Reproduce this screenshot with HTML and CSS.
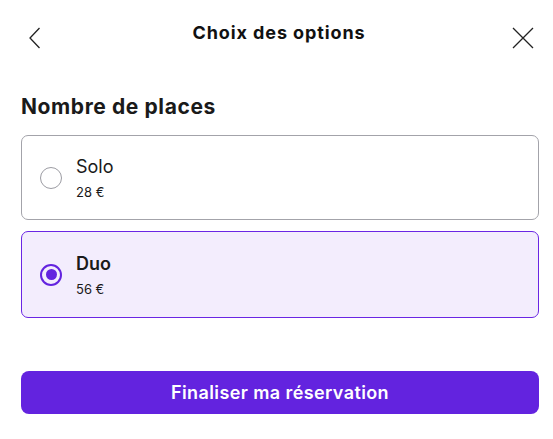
FILE: index.html
```html
<!DOCTYPE html>
<html lang="fr">
<head>
<meta charset="utf-8">
<link rel="stylesheet" href="styles.css">
</head>
<body>
<div class="page">
  <header class="topbar">
    <button class="icon-btn back" aria-label="Retour">
      <svg width="12" height="22" viewBox="0 0 12 22"><path d="M10.5 1 L1 11 L10.5 21" fill="none" stroke="#222" stroke-width="1.3"/></svg>
    </button>
    <h1 class="title">Choix des options</h1>
    <button class="icon-btn close" aria-label="Fermer">
      <svg width="22" height="22" viewBox="0 0 22 22"><path d="M1 1 L21 21 M21 1 L1 21" fill="none" stroke="#222" stroke-width="1.3"/></svg>
    </button>
  </header>

  <h2 class="section-title">Nombre de places</h2>

  <div class="options">
    <label class="option">
      <span class="radio"></span>
      <span class="option-text">
        <span class="option-name">Solo</span>
        <span class="option-price">28 €</span>
      </span>
    </label>
    <label class="option selected">
      <span class="radio"><span class="dot"></span></span>
      <span class="option-text">
        <span class="option-name">Duo</span>
        <span class="option-price">56 €</span>
      </span>
    </label>
  </div>

  <button class="cta">Finaliser ma réservation</button>
</div>
</body>
</html>
```
FILE: styles.css
```css
* { box-sizing: border-box; }
html, body { margin: 0; padding: 0; background: #fff; }
body { font-family: Inter, "Noto Sans", sans-serif; color: #1a1a1a; }
.page { padding: 0 15px 0 21px; width: 553px; }
.topbar {
  display: flex;
  align-items: flex-start;
  justify-content: space-between;
  height: 93px;
  padding-top: 27px;
}
.icon-btn {
  background: none; border: 0; padding: 0; margin: 0;
  display: flex; align-items: center; justify-content: center;
  width: 22px; height: 22px;
}
.icon-btn.back { margin-left: 3px; }
.icon-btn.close { margin-right: 4px; }
.title {
  margin: -5px 0 0 0;
  font-size: 18px;
  font-weight: 700;
  letter-spacing: 0.9px;
  color: #111;
}
.section-title {
  margin: 0;
  font-size: 21px;
  font-weight: 700;
  color: #1a1a1a;
  letter-spacing: 0.6px;
  line-height: 28px;
}
.options {
  display: flex; flex-direction: column; gap: 11px;
  margin-top: 14px;
  width: 518px;
}
.option {
  display: flex; align-items: center; gap: 14px;
  height: 85px;
  padding: 0 0 0 18px;
  border: 1.5px solid #a3a3aa;
  border-radius: 7px;
  background: #fff;
}
.option.selected {
  height: 87px;
  border: 1.5px solid #6a26e4;
  background: #f3edfd;
}
.radio {
  width: 22px; height: 22px; border-radius: 50%;
  border: 1.5px solid #9c9ca3;
  display: flex; align-items: center; justify-content: center;
  flex: none;
}
.selected .radio { border: 2px solid #6323df; }
.dot { width: 11px; height: 11px; border-radius: 50%; background: #6323df; }
.option-text { display: flex; flex-direction: column; gap: 6px; margin-top: 0; }
.option-name { font-size: 18px; font-weight: 400; color: #1a1a1a; line-height: 22px; }
.selected .option-name { font-weight: 600; }
.option-price { font-size: 13px; color: #1a1a1a; line-height: 16px; }
.cta {
  display: block;
  margin-top: 53px;
  width: 518px; height: 43px;
  border: 0; border-radius: 8px;
  background: #6323df;
  color: #fff;
  font-family: Inter, "Noto Sans", sans-serif;
  font-size: 18px; font-weight: 600;
  letter-spacing: 0.4px;
}
```
